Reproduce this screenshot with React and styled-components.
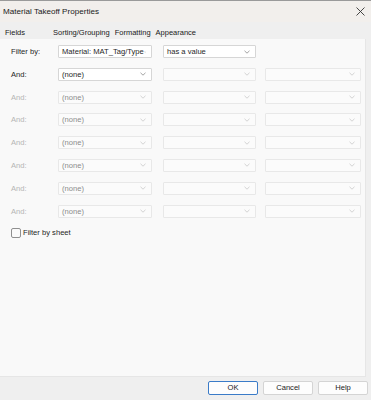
import React from "react";
import styled, { createGlobalStyle } from "styled-components";

const GlobalStyle = createGlobalStyle`
  html, body {
    margin: 0;
    padding: 0;
    background: #efefef;
  }
  body {
    font-family: "Liberation Sans", Arial, sans-serif;
    color: #1f1f1f;
  }
`;

const rows = [
  { label: "Filter by:", first: "Material: MAT_Tag/Type", second: "has a value", enabled: true, third: false },
  { label: "And:", first: "(none)", second: "", enabled: true, third: true },
  { label: "And:", first: "(none)", second: "", enabled: false, third: true },
  { label: "And:", first: "(none)", second: "", enabled: false, third: true },
  { label: "And:", first: "(none)", second: "", enabled: false, third: true },
  { label: "And:", first: "(none)", second: "", enabled: false, third: true },
  { label: "And:", first: "(none)", second: "", enabled: false, third: true },
  { label: "And:", first: "(none)", second: "", enabled: false, third: true },
];

const Chevron = ({ faded }) => (
  <svg width="6" height="4" viewBox="0 0 6 4">
    <path d="M0.5 0.8 L3 3.2 L5.5 0.8" fill="none" stroke={faded ? "#c8c8c8" : "#8a8a8a"} strokeWidth="0.8" />
  </svg>
);

const Select = ({ value, enabled, blank }) => (
  <SelectBox $enabled={enabled} $blank={blank}>
    <span>{value}</span>
    <Chevron faded={!enabled || blank} />
  </SelectBox>
);

const App = () => {
  return (
    <Window>
      <GlobalStyle />
      <TitleBar>
        <Title>Material Takeoff Properties</Title>
        <Close>
          <svg width="9" height="9" viewBox="0 0 9 9">
            <path d="M0.5 0.5 L8.5 8.5 M8.5 0.5 L0.5 8.5" stroke="#333" strokeWidth="0.9" />
          </svg>
        </Close>
      </TitleBar>
      <Tabs>
        <Tab $wide>Fields</Tab>
        <Tab>Sorting/Grouping</Tab>
        <Tab>Formatting</Tab>
        <Tab>Appearance</Tab>
      </Tabs>
      <Panel>
        <FilterGrid>
          {rows.map((r, i) => (
            <React.Fragment key={i}>
              <Label $enabled={r.enabled}>{r.label}</Label>
              <Select value={r.first} enabled={r.enabled} />
              <Select value={r.second} enabled={i === 0} blank={i !== 0} />
              {r.third ? <Select value="" enabled={false} blank /> : <span />}
            </React.Fragment>
          ))}
        </FilterGrid>
        <CheckRow>
          <CheckBox />
          <span>Filter by sheet</span>
        </CheckRow>
      </Panel>
      <Footer>
        <Button $primary>OK</Button>
        <Button>Cancel</Button>
        <Button>Help</Button>
      </Footer>
    </Window>
  );
};

const Window = styled.div`
  width: 371px;
  height: 400px;
  display: flex;
  flex-direction: column;
  background: #efefef;
  overflow: hidden;
`;

const TitleBar = styled.div`
  height: 21px;
  display: flex;
  align-items: center;
  justify-content: space-between;
  padding: 0 6px 0 3px;
  background: #f2efec;
  border-top: 1px solid #9a9a9a;
`;

const Title = styled.div`
  font-size: 8.1px;
  color: #1a1a1a;
`;

const Close = styled.div`
  display: flex;
  align-items: center;
`;

const Tabs = styled.div`
  height: 17px;
  box-sizing: border-box;
  padding: 3px 0 0 5px;
  display: flex;
  align-items: center;
  gap: 5px;
  font-size: 7.5px;
  color: #1a1a1a;
`;

const Tab = styled.div`
  min-width: ${(p) => (p.$wide ? "43px" : "auto")};
`;

const Panel = styled.div`
  height: 338px;
  margin-right: 5px;
  background: #f9f9f9;
  border-right: 1px solid #e6e6e6;
  border-bottom: 1px solid #e6e6e6;
  padding: 6px 0 0 11px;
  box-sizing: border-box;
`;

const FilterGrid = styled.div`
  display: grid;
  grid-template-columns: 37px 94px 94px 95px;
  column-gap: 10px;
  row-gap: 9.8px;
  align-items: center;

  & > :nth-child(4n + 3) {
    margin-left: 1px;
  }
  & > :nth-child(4n + 4) {
    margin-left: -1px;
  }
`;

const Label = styled.div`
  font-size: 7.6px;
  white-space: nowrap;
  color: ${(p) => (p.$enabled ? "#1f1f1f" : "#b5b5b5")};
`;

const SelectBox = styled.div`
  height: 13px;
  box-sizing: border-box;
  display: flex;
  align-items: center;
  justify-content: space-between;
  padding: 0 5px 0 3px;
  font-size: 7.6px;
  background: ${(p) => (p.$enabled && !p.$blank ? "#ffffff" : "#fbfbfb")};
  border: 1px solid ${(p) => (p.$enabled && !p.$blank ? "#d6d6d6" : "#e8e8e8")};
  color: ${(p) => (p.$enabled ? "#1f1f1f" : "#8c8c8c")};
  border-radius: 1px;
  white-space: nowrap;
  overflow: hidden;
`;

const CheckRow = styled.div`
  display: flex;
  align-items: center;
  gap: 2px;
  margin-top: 10px;
  font-size: 7.6px;
  color: #1f1f1f;
`;

const CheckBox = styled.div`
  width: 10px;
  height: 10px;
  box-sizing: border-box;
  border: 1px solid #8f8f8f;
  border-radius: 2px;
  background: #fafafa;
`;

const Footer = styled.div`
  flex: 1;
  display: flex;
  align-items: center;
  justify-content: flex-end;
  gap: 5px;
  padding: 0 3px 2px 0;
`;

const Button = styled.div`
  width: 50px;
  height: 14px;
  box-sizing: border-box;
  display: flex;
  align-items: center;
  justify-content: center;
  font-size: 7.6px;
  color: #1a1a1a;
  background: #fdfdfd;
  border: 1px solid ${(p) => (p.$primary ? "#3a7bc8" : "#d4d4d4")};
  border-radius: 2px;
`;

export default App;
